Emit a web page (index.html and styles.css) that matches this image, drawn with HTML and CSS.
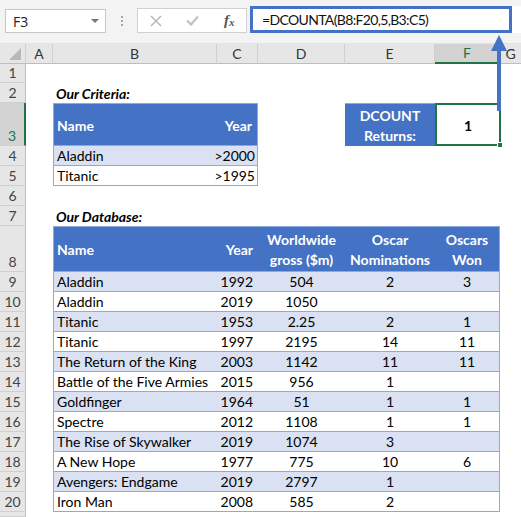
FILE: index.html
```html
<!DOCTYPE html>
<html>
<head>
    <meta charset="utf-8">
    <title>DCOUNTA</title>
    <link rel="stylesheet" href="styles.css">
</head>
<body>
<div class="all">
    <div class="bar">
        <div class="namebox"><span>F3</span><i class="drop"></i></div>
        <div class="dots"><b></b><b></b><b></b></div>
        <div class="icons">
            <svg class="ic" width="12" height="12" viewBox="0 0 12 12">
                <path d="M1 1 L11 11 M11 1 L1 11" stroke="#b3b3b3" stroke-width="1.4" fill="none"/>
            </svg>
            <svg class="ic" width="13" height="11" viewBox="0 0 13 11">
                <path d="M1 5.5 L5 9.5 L12 1.5" stroke="#c3c3c3" stroke-width="2.4" fill="none"/>
            </svg>
            <span class="fx">f<sub>x</sub></span>
        </div>
        <div class="formula">=DCOUNTA(B8:F20,5,B3:C5)</div>
        <div class="rest"></div>
    </div>

    <div class="row colhd">
        <div class="rh corner"></div>
        <div class="ca">A</div>
        <div class="cb">B</div>
        <div class="cc">C</div>
        <div class="cd">D</div>
        <div class="ce">E</div>
        <div class="cf sel">F</div>
        <div class="cg">G</div>
    </div>

    <div class="row r1"><div class="rh">1</div></div>
    <div class="row"><div class="rh">2</div><div class="ca"></div><div class="cb title">Our Criteria:</div></div>
    <div class="row tall">
        <div class="rh sel">3</div>
        <div class="ca"></div>
        <div class="cb t th tl mid">Name</div>
        <div class="cc t th tr mid right">Year</div>
        <div class="cd"></div>
        <div class="ce th mid center">DCOUNT<br>Returns:</div>
        <div class="cf active mid center">1<i class="handle"></i></div>
    </div>
    <div class="row"><div class="rh">4</div><div class="ca"></div><div class="cb t b1 tl">Aladdin</div><div class="cc t b1 tr right crit">&gt;2000</div></div>
    <div class="row"><div class="rh">5</div><div class="ca"></div><div class="cb t tl">Titanic</div><div class="cc t tr right crit">&gt;1995</div></div>
    <div class="row"><div class="rh">6</div></div>
    <div class="row"><div class="rh">7</div><div class="ca"></div><div class="cb title">Our Database:</div></div>
    <div class="row taller">
        <div class="rh">8</div>
        <div class="ca"></div>
        <div class="cb t th tl mid">Name</div>
        <div class="cc t th mid right">Year</div>
        <div class="cd t th mid center">Worldwide<br>gross ($m)</div>
        <div class="ce t th mid center">Oscar<br>Nominations</div>
        <div class="cf t th tr mid center">Oscars<br>Won</div>
    </div>
    <div id="db"></div>
    <div class="row r21"><div class="rh"></div></div>

    <svg class="arrow" width="24" height="80" viewBox="0 0 24 80">
        <rect x="9" y="14" width="4" height="62" fill="#4472c4"/>
        <polygon points="11,0 3,16 19,16" fill="#4472c4"/>
    </svg>
</div>
<script>
    var films = [
        ["Aladdin", 1992, "504", "2", "3"],
        ["Aladdin", 2019, "1050", "", ""],
        ["Titanic", 1953, "2.25", "2", "1"],
        ["Titanic", 1997, "2195", "14", "11"],
        ["The Return of the King", 2003, "1142", "11", "11"],
        ["Battle of the Five Armies", 2015, "956", "1", ""],
        ["Goldfinger", 1964, "51", "1", "1"],
        ["Spectre", 2012, "1108", "1", "1"],
        ["The Rise of Skywalker", 2019, "1074", "3", ""],
        ["A New Hope", 1977, "775", "10", "6"],
        ["Avengers: Endgame", 2019, "2797", "1", ""],
        ["Iron Man", 2008, "585", "2", ""]
    ];
    var str = '';
    for(var i=0;i<films.length;i++){
        var f = films[i];
        var band = i%2==0 ? ' b1' : '';
        str+='<div class="row"><div class="rh">'+(i+9)+'</div><div class="ca"></div>';
        str+='<div class="cb t tl'+band+'">'+f[0]+'</div>';
        str+='<div class="cc t right'+band+'">'+f[1]+'</div>';
        str+='<div class="cd t center'+band+'">'+f[2]+'</div>';
        str+='<div class="ce t center'+band+'">'+f[3]+'</div>';
        str+='<div class="cf t tr center'+band+'">'+f[4]+'</div>';
        str+='</div>';
    }
    document.getElementById("db").innerHTML=str;
</script>
</body>
</html>
```

FILE: styles.css
```css
*{
    box-sizing: border-box;
}
body{
    margin: 0px;
    background-color: #ffffff;
    font-family: "Lato", "Liberation Sans", sans-serif;
    font-size: 14px;
    color: #000000;
}
.all{
    position: relative;
    width: 521px;
    height: 517px;
    overflow: hidden;
}
.bar{
    display: flex;
    align-items: flex-end;
    height: 44px;
    padding: 0px 0px 10px 5px;
    background-color: #f3f3f3;
    border-bottom: 1px solid #e1e1e1;
}
.namebox{
    display: flex;
    align-items: center;
    justify-content: space-between;
    width: 101px;
    height: 24px;
    padding: 0px 6px 0px 7px;
    background-color: #ffffff;
    border: 1px solid #c6c6c6;
    font-family: "Open Sans", "Liberation Sans", sans-serif;
    font-size: 14px;
    color: #222222;
}
.drop{
    width: 0px;
    height: 0px;
    border-left: 4px solid transparent;
    border-right: 4px solid transparent;
    border-top: 4px solid #777777;
}
.dots{
    display: flex;
    flex-direction: column;
    align-items: center;
    gap: 2px;
    width: 31px;
    height: 24px;
    padding-top: 7px;
}
.dots b{
    width: 2px;
    height: 2px;
    background-color: #a6a6a6;
}
.icons{
    display: flex;
    align-items: center;
    gap: 24px;
    width: 110px;
    height: 25px;
    margin-right: 3px;
    padding: 0px 0px 0px 12px;
    background-color: #ffffff;
    border: 1px solid #d0d0d0;
}
.fx{
    font-family: "Liberation Serif", serif;
    font-style: italic;
    font-weight: bold;
    color: #555555;
    font-size: 15px;
    margin-left: 1px;
}
.fx sub{
    font-size: 11px;
    vertical-align: -1px;
}
.formula{
    width: 262px;
    height: 27px;
    padding: 0px 0px 0px 9px;
    line-height: 21px;
    background-color: #ffffff;
    border: 3px solid #4472c4;
    font-size: 14px;
    letter-spacing: -0.65px;
    color: #111111;
}
.rest{
    flex: 1;
    height: 27px;
    background-color: #ffffff;
}
.row{
    display: flex;
    height: 20px;
}
.row > div{
    display: flex;
    align-items: flex-end;
    flex-shrink: 0;
    height: 100%;
    padding: 0px 3px 0px 3px;
    line-height: 18px;
    white-space: nowrap;
    position: relative;
}
.r1{
    height: 19px;
}
.tall{
    height: 43px;
}
.taller{
    height: 46px;
}
.r21{
    height: 5px;
}
.rh{
    width: 26px;
    justify-content: center;
    background-color: #e6e6e6;
    border-right: 1px solid #bdbdbd;
    border-bottom: 1px solid #d0d0d0;
    color: #444444;
}
.row > .rh{
    padding: 0px;
}
.ca{ width: 27px; }
.cb{ width: 164px; }
.cc{ width: 41px; }
.cd{ width: 87px; }
.ce{ width: 90px; }
.cf{ width: 65px; }
.cg{ flex: 1; }
.colhd > div{
    justify-content: center;
    background-color: #e6e6e6;
    border-right: 1px solid #d0d0d0;
    border-bottom: 1px solid #bdbdbd;
    color: #333333;
}
.row.colhd > div{
    align-items: center;
    padding: 0px;
}
.colhd > .cg{
    border-right: 0px;
}
.corner::after{
    content: "";
    position: absolute;
    right: 4px;
    bottom: 3px;
    width: 12px;
    height: 12px;
    background-color: #b8b8b8;
    clip-path: polygon(100% 0%, 100% 100%, 0% 100%);
}
.row > .sel{
    background-color: #d3d3d3;
    color: #217346;
}
.colhd > .sel{
    border-bottom: 2px solid #217346;
}
.rh.sel{
    border-right: 2px solid #217346;
}
.title{
    font-weight: bold;
    font-style: italic;
}
.t{
    border-bottom: 1px solid #8ea9db;
}
.tl{
    border-left: 1px solid #8ea9db;
}
.tr{
    border-right: 1px solid #8ea9db;
}
.b1{
    background-color: #d9e1f2;
}
.th{
    background-color: #4472c4;
    color: #ffffff;
    font-weight: bold;
    border-top: 1px solid #8ea9db;
}
.row > .mid{
    align-items: center;
    padding-top: 2px;
    line-height: 20px;
}
.right{
    justify-content: flex-end;
}
.row > .right{
    padding-right: 5px;
}
.row > .crit{
    padding-right: 2px;
}
.center{
    justify-content: center;
    text-align: center;
}
.active{
    font-weight: bold;
    border: 2px solid #217346;
    width: 66px;
}
.row > .active{
    padding-top: 2px;
}
.handle{
    position: absolute;
    right: -4px;
    bottom: -4px;
    width: 6px;
    height: 6px;
    background-color: #217346;
    border: 1px solid #ffffff;
}
.arrow{
    position: absolute;
    left: 488px;
    top: 35px;
}
```
